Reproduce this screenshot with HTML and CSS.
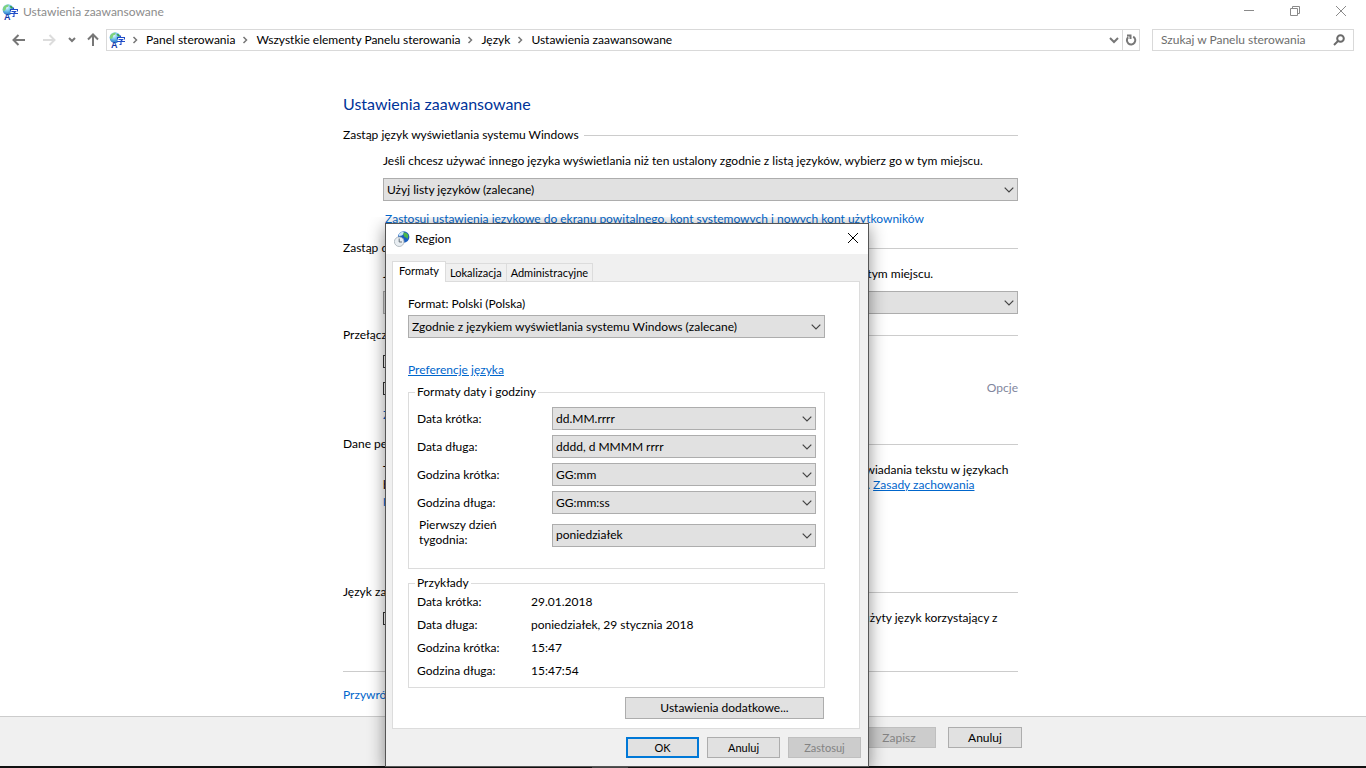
FILE: index.html
```
<!DOCTYPE html>
<html lang="pl">
<head>
    <meta charset="utf-8">
    <title>Ustawienia zaawansowane</title>
    <link rel="stylesheet" href="styles.css">
</head>
<body>
    <svg class="defs" aria-hidden="true">
        <defs>
            <radialGradient id="ocean" cx="40%" cy="30%" r="70%">
                <stop offset="0" stop-color="#e2f8ff"></stop>
                <stop offset="0.5" stop-color="#6fc0ea"></stop>
                <stop offset="1" stop-color="#1f6cc4"></stop>
            </radialGradient>
            <symbol id="chevron-down" viewBox="0 0 10 6">
                <path d="M0.7 0.7 5 5 9.3 0.7" fill="none" stroke="currentColor" stroke-width="1.2"></path>
            </symbol>
            <symbol id="crumb" viewBox="0 0 6 8">
                <path d="M1.5 1 4.5 4 1.5 7" fill="none" stroke="currentColor" stroke-width="1.5"></path>
            </symbol>
            <symbol id="language" viewBox="0 0 16 16">
                <circle cx="6" cy="5.6" r="5.4" fill="url(#ocean)"></circle>
                <path d="M2 2.5C3.5 0.8 5.5 0.5 7 0.8L6 2.8 4.2 3.5 3.5 6 1.5 7.2C0.5 5.5 1 3.8 2 2.5z" fill="#7fd37a"></path>
                <path d="M7.5 2 9.8 2.2 10.8 4 9 4.5z" fill="#3a9e45"></path>
                <path d="M8.5 5.5H15.5V12.5H9.5L8.5 10z" fill="#fff"></path>
                <path d="M11.5 3.5V5.5M8.5 7.5V5.5H15.5V7.5M9.5 7.5H13.5L12 9V12.5H10.5M8 9.5H16" fill="none" stroke="#1f4cc8" stroke-width="1.1"></path>
                <text x="2" y="16" class="glyph-a">A</text>
            </symbol>
            <symbol id="region" viewBox="0 0 16 16">
                <circle cx="9.7" cy="6" r="5.7" fill="#1c5fc0"></circle>
                <path d="M5 3C6.5 1 8.5 0.6 10 0.8L9.5 3 8 4.5 5 5z" fill="#c9e8f7"></path>
                <path d="M9.5 1.5C12 1 14 2.8 14.4 4.5L13.5 8 12 6.5 10.5 6 9.5 3.8z" fill="#4cb84a"></path>
                <circle cx="5.2" cy="10.7" r="4.8" fill="#e9eef2" stroke="#a3adb5" stroke-width="0.8"></circle>
                <path d="M5.2 7.5V11H8" fill="none" stroke="#66727c" stroke-width="1"></path>
            </symbol>
        </defs>
    </svg>

    <header class="titlebar">
        <svg class="app-icon"><use href="#language"></use></svg>
        <span class="titlebar-text">Ustawienia zaawansowane</span>
        <button class="win-btn" aria-label="Minimalizuj">
            <svg width="12" height="12" viewBox="0 0 12 12"><path d="M1 4.5H11"></path></svg>
        </button>
        <button class="win-btn" aria-label="Przywróć w dół">
            <svg width="12" height="12" viewBox="0 0 12 12"><path d="M1.5 2.5H8.5V9.5H1.5zM3.5 2.5V0.5H10.5V7.5H8.5"></path></svg>
        </button>
        <button class="win-btn" aria-label="Zamknij">
            <svg width="12" height="12" viewBox="0 0 12 12"><path d="M1 0 11 10M11 0 1 10"></path></svg>
        </button>
    </header>

    <nav class="navbar">
        <button class="nav-btn" aria-label="Wstecz">
            <svg width="14" height="12" viewBox="0 0 14 12"><path d="M6.5 1 1.5 6 6.5 11M1.5 6H13"></path></svg>
        </button>
        <button class="nav-btn" aria-label="Dalej" disabled>
            <svg width="14" height="12" viewBox="0 0 14 12"><path d="M7.5 1 12.5 6 7.5 11M12.5 6H1"></path></svg>
        </button>
        <button class="nav-btn nav-history" aria-label="Ostatnie lokalizacje">
            <svg width="8" height="6" viewBox="0 0 8 6"><path d="M1 1 4 4 7 1"></path></svg>
        </button>
        <button class="nav-btn nav-up" aria-label="W górę">
            <svg width="14" height="14" viewBox="0 0 14 14"><path d="M2 6.5 7 1.5 12 6.5M7 1.5V13"></path></svg>
        </button>
        <div class="address">
            <svg class="app-icon"><use href="#language"></use></svg>
            <svg class="crumb"><use href="#crumb"></use></svg>
            <a href="#">Panel sterowania</a>
            <svg class="crumb"><use href="#crumb"></use></svg>
            <a href="#">Wszystkie elementy Panelu sterowania</a>
            <svg class="crumb"><use href="#crumb"></use></svg>
            <a href="#">Język</a>
            <svg class="crumb"><use href="#crumb"></use></svg>
            <a href="#">Ustawienia zaawansowane</a>
            <button class="address-btn address-open" aria-label="Poprzednie lokalizacje">
                <svg width="10" height="7" viewBox="0 0 10 7"><path d="M1 1 5 5 9 1"></path></svg>
            </button>
            <button class="address-btn refresh" aria-label="Odśwież">
                <svg width="12" height="12" viewBox="0 0 12 12"><path d="M8.2 2.6A4.2 4.2 0 1 1 3.2 3.2M2 1.5H5.5V5"></path></svg>
            </button>
        </div>
        <div class="search">
            <input type="search" aria-label="Szukaj" placeholder="Szukaj w Panelu sterowania">
            <svg width="12" height="12" viewBox="0 0 12 12"><circle cx="7.5" cy="4.5" r="3.3"></circle><path d="M5 7 1 11"></path></svg>
        </div>
    </nav>

    <main class="content">
        <h1>Ustawienia zaawansowane</h1>

        <section>
            <h2>Zastąp język wyświetlania systemu Windows</h2>
            <div class="section-body">
                <label for="displayLang">Jeśli chcesz używać innego języka wyświetlania niż ten ustalony zgodnie z listą języków, wybierz go w tym miejscu.</label>
                <div class="select">
                    <select id="displayLang"><option>Użyj listy języków (zalecane)</option></select>
                    <svg><use href="#chevron-down"></use></svg>
                </div>
                <a class="welcome-link" href="#">Zastosuj ustawienia językowe do ekranu powitalnego, kont systemowych i nowych kont użytkowników</a>
            </div>
        </section>

        <section>
            <h2>Zastąp domyślną metodę wprowadzania</h2>
            <div class="section-body">
                <label for="inputMethod">Jeśli chcesz używać metody wprowadzania innej niż pierwsza na liście języków, wybierz ją w tym miejscu.</label>
                <div class="select">
                    <select id="inputMethod"><option>Użyj listy języków (zalecane)</option></select>
                    <svg><use href="#chevron-down"></use></svg>
                </div>
            </div>
        </section>

        <section>
            <h2>Przełączanie metod wprowadzania</h2>
            <div class="section-body checks">
                <label class="check"><input type="checkbox"> Pozwól mi ustawić inną metodę wprowadzania dla każdego okna</label>
                <div class="check-row">
                    <label class="check"><input type="checkbox"> Użyj paska języka pulpitu, gdy jest dostępny</label>
                    <a class="options" href="#">Opcje</a>
                </div>
                <a href="#">Zmień klawisze dostępu paska języka</a>
            </div>
        </section>

        <section class="personal">
            <h2>Dane personalizacji</h2>
            <div class="section-body">
                <p>Te dane służą jedynie do ulepszania rozpoznawania pisma ręcznego i wyników funkcji podpowiadania tekstu w językach<br>
                bez edytorów IME na tym komputerze. Żadne informacje nie są wysyłane do firmy Microsoft. <a class="underlined" href="#">Zasady zachowania poufności informacji</a></p>
            </div>
        </section>

        <section>
            <h2>Język zawartości sieci Web</h2>
            <div class="section-body">
                <label class="check"><input type="checkbox"> Nie pozwalaj witrynom sieci Web na dostęp do spisu moich języków. Zostanie w zamian użyty język korzystający z</label>
            </div>
        </section>

        <div class="restore"><a href="#">Przywróć wartości domyślne</a></div>
    </main>

    <footer class="page-footer">
        <button class="btn" disabled>Zapisz</button>
        <button class="btn">Anuluj</button>
    </footer>
    <div class="taskbar"><span></span></div>

    <div class="dialog" role="dialog" aria-labelledby="dialogTitle">
        <div class="dialog-title">
            <svg class="app-icon"><use href="#region"></use></svg>
            <span id="dialogTitle">Region</span>
            <button class="dialog-close" aria-label="Zamknij">
                <svg width="12" height="12" viewBox="0 0 12 12"><path d="M1 1 11 11M11 1 1 11"></path></svg>
            </button>
        </div>
        <div class="tabs" role="tablist">
            <button class="tab active" role="tab">Formaty</button>
            <button class="tab" role="tab">Lokalizacja</button>
            <button class="tab" role="tab">Administracyjne</button>
        </div>
        <div class="panel">
            <label for="format">Format: Polski (Polska)</label>
            <div class="select">
                <select id="format"><option>Zgodnie z językiem wyświetlania systemu Windows (zalecane)</option></select>
                <svg><use href="#chevron-down"></use></svg>
            </div>
            <a class="underlined preferences" href="#">Preferencje języka</a>

            <fieldset class="formats">
                <legend>Formaty daty i godziny</legend>
                <div class="field">
                    <label for="shortDate">Data krótka:</label>
                    <div class="select"><select id="shortDate"><option>dd.MM.rrrr</option></select><svg><use href="#chevron-down"></use></svg></div>
                </div>
                <div class="field">
                    <label for="longDate">Data długa:</label>
                    <div class="select"><select id="longDate"><option>dddd, d MMMM rrrr</option></select><svg><use href="#chevron-down"></use></svg></div>
                </div>
                <div class="field">
                    <label for="shortTime">Godzina krótka:</label>
                    <div class="select"><select id="shortTime"><option>GG:mm</option></select><svg><use href="#chevron-down"></use></svg></div>
                </div>
                <div class="field">
                    <label for="longTime">Godzina długa:</label>
                    <div class="select"><select id="longTime"><option>GG:mm:ss</option></select><svg><use href="#chevron-down"></use></svg></div>
                </div>
                <div class="field">
                    <label class="two-line" for="firstDay">Pierwszy dzień<br>tygodnia:</label>
                    <div class="select"><select id="firstDay"><option>poniedziałek</option></select><svg><use href="#chevron-down"></use></svg></div>
                </div>
            </fieldset>

            <fieldset class="examples">
                <legend>Przykłady</legend>
                <dl>
                    <dt>Data krótka:</dt><dd>29.01.2018</dd>
                    <dt>Data długa:</dt><dd>poniedziałek, 29 stycznia 2018</dd>
                    <dt>Godzina krótka:</dt><dd>15:47</dd>
                    <dt>Godzina długa:</dt><dd>15:47:54</dd>
                </dl>
            </fieldset>

            <button class="btn more">Ustawienia dodatkowe...</button>
        </div>
        <div class="dialog-buttons">
            <button class="btn default">OK</button>
            <button class="btn">Anuluj</button>
            <button class="btn" disabled>Zastosuj</button>
        </div>
    </div>
</body>
</html>
```
FILE: styles.css
```
* {
    margin: 0;
    padding: 0;
    box-sizing: border-box;
}

body {
    position: relative;
    display: flex;
    flex-direction: column;
    min-height: 100vh;
    background: #fff;
    color: #000;
    font-family: Lato, "Noto Sans", sans-serif;
    font-size: 12px;
    line-height: 16px;
}

button, input, select {
    font: inherit;
    color: inherit;
}

button {
    border: none;
    background: none;
}

a {
    color: #0066cc;
    text-decoration: none;
}

.defs {
    position: absolute;
    width: 0;
    height: 0;
}

.glyph-a {
    font: bold 9px "Liberation Sans", sans-serif;
    fill: #1238a8;
}

.app-icon {
    flex: none;
    width: 16px;
    height: 16px;
}

.underlined {
    text-decoration: underline;
}

/* main window bars */
.titlebar {
    display: flex;
    align-items: center;
    height: 24px;
    padding: 0 2px;
}

.titlebar-text {
    flex: 1;
    margin-left: 5px;
    color: #8c8c8c;
}

.win-btn {
    display: flex;
    justify-content: center;
    align-items: center;
    width: 46px;
    height: 20px;
}

.win-btn svg {
    fill: none;
    stroke: #8a8a8a;
    stroke-width: 1;
}

.navbar {
    display: flex;
    align-items: center;
    height: 32px;
    padding: 0 12px 0 4px;
}

.nav-btn {
    display: flex;
    justify-content: center;
    align-items: center;
    width: 30px;
    height: 22px;
}

.nav-btn svg {
    fill: none;
    stroke: #777;
    stroke-width: 2;
}

.nav-btn:disabled svg {
    stroke: #dcdcdc;
}

.nav-history {
    width: 16px;
}

.nav-up {
    width: 26px;
}

.address {
    flex: 1;
    display: flex;
    align-items: center;
    height: 22px;
    padding-left: 2px;
    border: 1px solid #d9d9d9;
}

.address a {
    color: #000;
}

.crumb {
    width: 6px;
    height: 8px;
    margin: 0 8px 0 7px;
    color: #777;
}

.address-btn {
    display: flex;
    justify-content: center;
    align-items: center;
    width: 17px;
    height: 20px;
}

.address-btn svg {
    fill: none;
    stroke: #777;
    stroke-width: 2;
}

.address-open {
    margin-left: auto;
}

.refresh {
    border-left: 1px solid #d9d9d9;
}

.search {
    display: flex;
    align-items: center;
    width: 202px;
    height: 22px;
    margin-left: 12px;
    padding: 0 8px;
    border: 1px solid #d9d9d9;
}

.search input {
    flex: 1;
    min-width: 0;
    border: none;
    outline: none;
    background: none;
}

.search input::placeholder {
    color: #6d6d6d;
}

.search svg {
    fill: none;
    stroke: #6a6a6a;
    stroke-width: 2;
}

/* settings page */
.content {
    flex: 1;
    width: 100%;
    max-width: 680px;
    margin: 0 auto;
    padding: 38px 5px 13px 0;
}

h1 {
    color: #003399;
    font-size: 16px;
    font-weight: normal;
    line-height: 20px;
}

section {
    margin-top: 13px;
}

h2 {
    display: flex;
    align-items: center;
    gap: 5px;
    font-size: 12px;
    font-weight: normal;
}

h2::after {
    content: "";
    flex: 1;
    border-top: 1px solid #cccccc;
}

.section-body {
    display: flex;
    flex-direction: column;
    gap: 9px;
    padding: 10px 0 0 40px;
    white-space: nowrap;
}

.section-body p {
    line-height: 15px;
    white-space: normal;
}

.section-body.checks {
    gap: 11px;
}

.welcome-link {
    padding: 1px 0 0 2px;
}

.check {
    display: flex;
    align-items: center;
    gap: 5px;
}

.check input {
    appearance: none;
    width: 13px;
    height: 13px;
    border: 1px solid #333;
    background: #fff;
}

.check-row {
    display: flex;
    justify-content: space-between;
}

.options {
    color: #7f869d;
}

.personal {
    padding-bottom: 64px;
}

.restore {
    margin-top: 45px;
    padding-top: 15px;
    border-top: 1px solid #cccccc;
}

/* combo boxes and push buttons */
.select {
    position: relative;
}

.select select {
    appearance: none;
    display: block;
    width: 100%;
    height: 23px;
    padding: 0 20px 0 3px;
    border: 1px solid #adadad;
    border-radius: 0;
    background: #e1e1e1;
}

.select svg {
    position: absolute;
    top: 9px;
    right: 4px;
    width: 10px;
    height: 6px;
    color: #444;
    pointer-events: none;
}

.btn {
    width: 73px;
    height: 21px;
    border: 1px solid #adadad;
    background: #e1e1e1;
}

.btn:disabled {
    border-color: #bfbfbf;
    background: #cccccc;
    color: #838383;
}

.btn.default {
    border: 2px solid #0078d7;
}

.page-footer {
    display: flex;
    justify-content: center;
    gap: 12px;
    height: 50px;
    padding-top: 10px;
    padding-left: 518px;
    border-top: 1px solid #cccccc;
    background: #f0f0f0;
}

.page-footer .btn {
    width: 74px;
}

.taskbar {
    height: 2px;
    background: #111;
}

.taskbar span {
    display: block;
    width: 36px;
    height: 2px;
    margin-left: 592px;
    background: #444;
}

/* region window */
.dialog {
    position: absolute;
    top: 223px;
    left: 385px;
    width: 484px;
    border: 1px solid #555;
    background: #f0f0f0;
    box-shadow: 0 4px 16px rgba(0, 0, 0, 0.45);
    clip-path: inset(-6px -24px 0 -24px);
}

.dialog-title {
    display: flex;
    align-items: center;
    height: 30px;
    padding: 0 8px;
    background: #fff;
}

.dialog-title span {
    flex: 1;
    margin-left: 5px;
}

.dialog-close {
    display: flex;
    padding: 0 1px 2px;
}

.dialog-close svg {
    fill: none;
    stroke: #000;
    stroke-width: 1;
}

.tabs {
    display: flex;
    align-items: flex-end;
    height: 27px;
    padding-left: 6px;
}

.tab {
    height: 18px;
    padding: 0 4px;
    border: 1px solid #dcdcdc;
    border-left: none;
    border-bottom: none;
    font-size: 11px;
}

.tab.active {
    position: relative;
    height: 21px;
    margin-bottom: -1px;
    padding: 0 6px 2px;
    border-left: 1px solid #dcdcdc;
    background: #fff;
}

.panel {
    display: flex;
    flex-direction: column;
    margin: 0 8px 0 6px;
    padding: 14px 34px 9px 15px;
    border: 1px solid #dcdcdc;
    background: #fff;
}

.panel > .select {
    margin-top: 3px;
}

.preferences {
    align-self: flex-start;
    margin-top: 24px;
}

fieldset {
    min-width: 0;
    margin-top: 6px;
    padding: 7px 8px;
    border: 1px solid #dcdcdc;
}

legend {
    margin-left: -2px;
    padding: 0 2px;
}

.formats {
    display: flex;
    flex-direction: column;
    gap: 5px;
    padding-bottom: 17px;
}

.field {
    display: flex;
    align-items: center;
}

.field label {
    flex: 1;
}

.field .select {
    width: 264px;
}

.field .two-line {
    margin-top: -2px;
    padding: 0 0 4px 2px;
    line-height: 15px;
}

.examples {
    padding: 3px 8px 8px;
}

.examples dl {
    display: grid;
    grid-template-columns: 114px 1fr;
    row-gap: 7px;
}

.more {
    align-self: flex-end;
    width: 199px;
    height: 22px;
    margin-top: 9px;
    margin-right: 1px;
}

.dialog-buttons {
    display: flex;
    justify-content: flex-end;
    gap: 8px;
    padding: 8px 7px;
}

.dialog-buttons .btn {
    font-size: 11px;
}
```
